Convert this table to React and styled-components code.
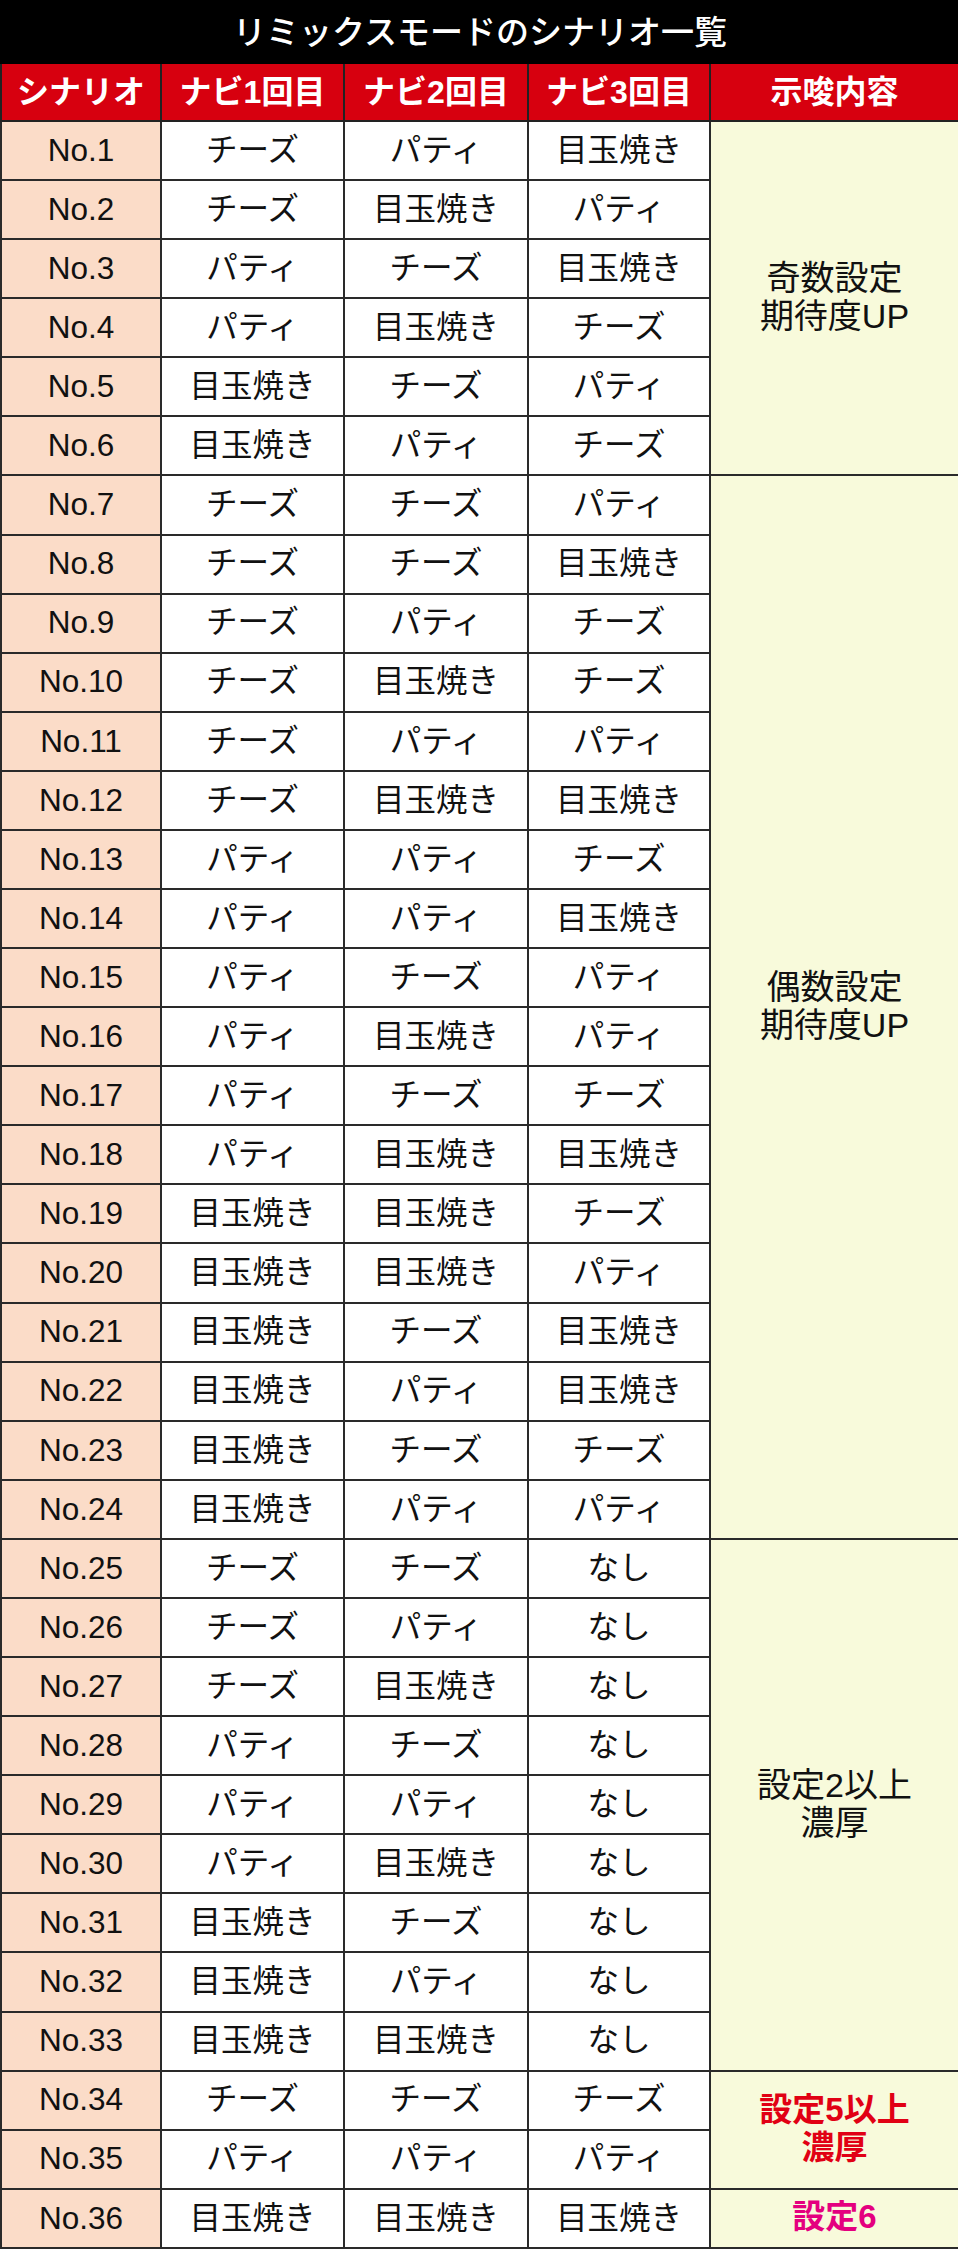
import React from 'react';
import styled, {createGlobalStyle} from 'styled-components';

//-----< Data >-----\\
const C = 'チーズ';
const P = 'パティ';
const M = '目玉焼き';
const N = 'なし';

const rows = [
    [C, P, M], [C, M, P], [P, C, M], [P, M, C], [M, C, P], [M, P, C],
    [C, C, P], [C, C, M], [C, P, C], [C, M, C], [C, P, P], [C, M, M],
    [P, P, C], [P, P, M], [P, C, P], [P, M, P], [P, C, C], [P, M, M],
    [M, M, C], [M, M, P], [M, C, M], [M, P, M], [M, C, C], [M, P, P],
    [C, C, N], [C, P, N], [C, M, N], [P, C, N], [P, P, N], [P, M, N],
    [M, C, N], [M, P, N], [M, M, N],
    [C, C, C], [P, P, P],
    [M, M, M],
];

// hint cells keyed by the row index they start on
const hints = {
    0: {span: 6, lines: ['奇数設定', '期待度UP']},
    6: {span: 18, lines: ['偶数設定', '期待度UP']},
    24: {span: 9, lines: ['設定2以上', '濃厚']},
    33: {span: 2, lines: ['設定5以上', '濃厚'], tone: 'red'},
    35: {span: 1, lines: ['設定6'], tone: 'pink'},
};

const toneColors = {
    red: '#e10014',
    pink: '#e4007f',
};

//-----< Styling >-----\\
const GlobalStyle = createGlobalStyle`
    body {
        margin: 0;
        background: #ffffff;
        font-family: "Liberation Sans", "Noto Sans CJK JP", sans-serif;
    }
`;

const Table = styled.table`
    width: 958px;
    table-layout: fixed;
    border-collapse: collapse;
    color: #111;
`;

const Row = styled.tr`
    height: ${props => props.$h}px;
`;

const Title = styled.th`
    padding: 0;
    line-height: 1;
    background: #000;
    color: #fff;
    font-size: 33px;
    font-weight: 500;
    border: 2px solid #000;
`;

const Head = styled.th`
    padding: 0;
    line-height: 1;
    background: #d7000f;
    color: #fff;
    font-size: 32px;
    font-weight: 700;
    border: 2px solid #222;
`;

const Cell = styled.td`
    padding: 0;
    line-height: 1;
    text-align: center;
    font-size: 31.5px;
    border: 2px solid #2a2a2a;
    background: ${props => props.$bg || '#fff'};
`;

const Hint = styled.td`
    padding: 0 0 2px;
    text-align: center;
    vertical-align: middle;
    font-size: ${props => props.$tone ? 33 : 34}px;
    line-height: 38px;
    font-weight: ${props => props.$tone ? 700 : 400};
    color: ${props => toneColors[props.$tone] || '#111'};
    background: #f8fadb;
    border: 2px solid #2a2a2a;
`;

//-----< Component Function >-----\\
export default function App(){
    return (
        <>
            <GlobalStyle />
            <Table>
                <colgroup>
                    <col style={{width: 160}} />
                    <col style={{width: 183}} />
                    <col style={{width: 184}} />
                    <col style={{width: 182}} />
                    <col style={{width: 249}} />
                </colgroup>
                <thead>
                    <Row $h={62}>
                        <Title colSpan={5}>リミックスモードのシナリオ一覧</Title>
                    </Row>
                    <Row $h={58}>
                        <Head>シナリオ</Head>
                        <Head>ナビ1回目</Head>
                        <Head>ナビ2回目</Head>
                        <Head>ナビ3回目</Head>
                        <Head>示唆内容</Head>
                    </Row>
                </thead>
                <tbody>
                    {rows.map((navi, i) => {
                        const hint = hints[i];
                        return (
                            <Row $h={59.08} key={i}>
                                <Cell $bg='#fbdcc8'>No.{i + 1}</Cell>
                                {navi.map((n, j) => <Cell key={j}>{n}</Cell>)}
                                {hint && (
                                    <Hint rowSpan={hint.span} $tone={hint.tone}>
                                        {hint.lines.map((l, k) => <div key={k}>{l}</div>)}
                                    </Hint>
                                )}
                            </Row>
                        );
                    })}
                </tbody>
            </Table>
        </>
    );
}
